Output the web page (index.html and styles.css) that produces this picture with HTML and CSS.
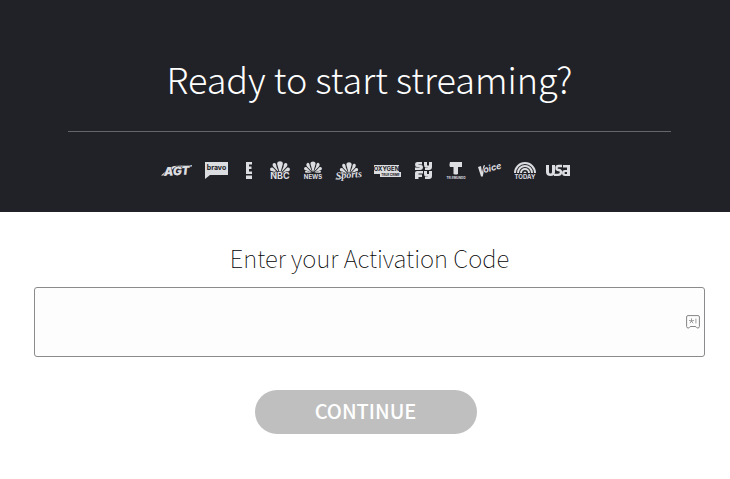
FILE: index.html
```html
<!DOCTYPE html>
<html lang="en">
<head>
<meta charset="utf-8">
<meta name="viewport" content="width=device-width, initial-scale=1">
<title>Activate</title>
<link rel="stylesheet" href="styles.css">
</head>
<body>
<svg class="defs" aria-hidden="true">
  <symbol id="peacock" viewBox="0 0 20 13">
    <g fill="#dcdde0">
      <path d="M9.6 11.8 7.2 3.2C6.5-.6 13.5-.6 12.8 3.2L10.4 11.8Z"/>
      <path d="M9 11.8 6.5 5.8C6.3 3 5.5 1.5 3.8 2 2 2.8 2.4 5 3.6 6.1Z"/>
      <path d="M11 11.8 13.5 5.8C13.7 3 14.5 1.5 16.2 2 18 2.8 17.6 5 16.4 6.1Z"/>
      <path d="M8.4 12.6 3.2 7C1.4 5.9 0 7 .1 8.4.2 10 1.5 10.2 2.5 10.3Z"/>
      <path d="M11.6 12.6 16.8 7C18.6 5.9 20 7 19.9 8.4 19.8 10 18.5 10.2 17.5 10.3Z"/>
      <path d="M8.2 13 2.4 10.8C.8 10.7 .7 13 2.3 13ZM11.8 13 17.6 10.8C19.2 10.7 19.3 13 17.7 13Z"/>
    </g>
  </symbol>
</svg>
<header class="hero">
  <h1>Ready to start streaming?</h1>
  <hr>
  <div class="logos">
    <svg width="33" height="20" viewBox="0 0 33 20" role="img" aria-label="AGT">
      <path d="M1 14.5 10 6.5 14 5 32 4 31.5 5.8 14 7 6 14.5Z"/>
      <text class="agt" x="4" y="15" transform="rotate(-3 4 15)">AGT</text>
    </svg>
    <svg width="27" height="20" viewBox="0 0 27 20" role="img" aria-label="bravo">
      <path d="M2 1H25V14H7L2 18Z"/>
      <text class="bravo" x="13.5" y="9" text-anchor="middle">bravo</text>
    </svg>
    <svg width="18" height="20" viewBox="0 0 18 20" role="img" aria-label="E!">
      <path d="M6 1H12V3.5H9V5.5H11.5V8H9V10.5H12V13H6ZM6 14.5H12V18H6Z"/>
    </svg>
    <svg width="24" height="20" viewBox="0 0 24 20" role="img" aria-label="NBC">
      <use href="#peacock" x="2" y="0" width="20" height="13"/>
      <text class="nbc" x="12" y="18" text-anchor="middle">NBC</text>
    </svg>
    <svg width="22" height="20" viewBox="0 0 22 20" role="img" aria-label="NBC News">
      <use href="#peacock" x="2" y="0" width="18" height="12"/>
      <text class="news" x="11" y="18" text-anchor="middle">NEWS</text>
    </svg>
    <svg width="29" height="20" viewBox="0 0 29 20" role="img" aria-label="NBC Sports">
      <use href="#peacock" x="5" y="1" width="20" height="12"/>
      <text class="sports" x="15" y="17" text-anchor="middle" transform="rotate(-5 15 17)">Sports</text>
      <path d="M1.5 18Q6 19.5 9 15.5" fill="none" stroke="#dcdde0" stroke-width=".8"/>
    </svg>
    <svg width="29" height="20" viewBox="0 0 29 20" role="img" aria-label="Oxygen True Crime">
      <path d="M1 4H26V11H28V16H7V13H1Z"/>
      <text class="oxygen" x="13.5" y="10" text-anchor="middle">OXYGEN</text>
      <text class="crime" x="17.5" y="15" text-anchor="middle">TRUE CRIME</text>
    </svg>
    <svg width="23" height="20" viewBox="0 0 23 20" role="img" aria-label="SYFY">
      <path d="M5 1H10V3.5H6.5V4H9Q11 4 11 6 11 9 8 9H3V6.5H7.5V6H5Q3 6 3 3.5 3 1 5 1ZM12 1H15V4.5H17V1H20V6Q20 9 17 9H13V6.8H16V6.5H14Q12 6.5 12 4ZM5 10H11V12.5H6.5V13.5H10V16H6.5V18H3V12Q3 10 5 10ZM12 10H15V13H17V10H20V15Q20 18 17 18H13V15.8H16V15.5H14Q12 15.5 12 13Z"/>
    </svg>
    <svg width="22" height="20" viewBox="0 0 22 20" role="img" aria-label="Telemundo">
      <path d="M5 1H17V6H13V13Q11 14 8.5 13V6H5Q4 3.5 5 1Z"/>
      <text class="telemundo" x="11" y="18" text-anchor="middle">TELEMUNDO</text>
    </svg>
    <svg width="27" height="20" viewBox="0 0 27 20" role="img" aria-label="The Voice">
      <path d="M1 6 4 5 5 11 6.5 4.5 8 4 5.8 15.5H4Z"/>
      <text class="voice" x="7" y="12" transform="rotate(-14 7 12)">oice</text>
    </svg>
    <svg width="22" height="20" viewBox="0 0 22 20" role="img" aria-label="Today">
      <path d="M1 12A10 10 0 0 1 21 12M4 12A7 7 0 0 1 18 12M7 12A4 4 0 0 1 15 12" fill="none" stroke="#dcdde0" stroke-width="2"/>
      <path d="M9.5 12A1.5 1.5 0 0 1 12.5 12Z"/>
      <text class="today" x="11" y="18" text-anchor="middle">TODAY</text>
    </svg>
    <svg width="25" height="20" viewBox="0 0 25 20" role="img" aria-label="USA">
      <path d="M0 4H3V11Q3 12.5 4.5 12.5 6 12.5 6 11V4H9V11Q9 15 4.5 15 0 15 0 11Z"/>
      <path d="M16 5H12.5Q10.5 5 10.5 7T12.5 9Q15 9.3 15 11 15 13.8 12 13.8H8" fill="none" stroke="#dcdde0" stroke-width="2.3"/>
      <path fill-rule="evenodd" d="M17 4H24V15H19Q16 15 16 12T19 9H21V6.5H17ZM21 11H19.5Q18.5 11 18.5 12T19.5 13H21Z"/>
    </svg>
  </div>
</header>
<main>
  <form>
    <label for="code">Enter your Activation Code</label>
    <div class="field">
      <input id="code" type="text" autocomplete="off">
      <svg class="key" width="14" height="14" viewBox="0 0 14 14" aria-hidden="true">
        <path d="M2 .6H12Q13.4 .6 13.4 2V11.5Q13.4 12.8 12 13 10.8 13.2 10.5 12.4 10.2 11.5 9 11.5H5Q3.8 11.5 3.5 12.4 3.2 13.2 2 13 .6 12.8 .6 11.5V2Q.6 .6 2 .6Z"/>
        <path d="M5.5 3.3V6L3 5.3M5.5 6 8 5.3M5.5 6 4 8.2M5.5 6 7 8.2M9.9 3.6V8.4" stroke-width=".8"/>
      </svg>
    </div>
    <button type="button">CONTINUE</button>
  </form>
</main>
</body>
</html>
```
FILE: styles.css
```css
* {
  box-sizing: border-box;
}

body {
  margin: 0;
  background: #fff;
  color: #212227;
  font-family: "Noto Sans CJK SC", "Open Sans", sans-serif;
  font-weight: 300;
}

.defs {
  display: none;
}

.hero {
  padding: 54px 25px 31px 34px;
  background: #212227;
  color: #fff;
  text-align: center;
}

h1 {
  margin: 0;
  font-size: 36px;
  font-weight: 300;
  line-height: 48px;
}

hr {
  width: 90%;
  height: 1px;
  margin: 29px auto;
  border: 0;
  background: #65666a;
}

.logos {
  display: flex;
  justify-content: center;
  gap: 10px;
  margin-right: 8px;
}

.logos svg {
  flex: none;
  fill: #dcdde0;
  font-family: Inter, sans-serif;
  font-weight: 700;
}

.logos text {
  stroke: #212227;
  stroke-width: 1px;
  paint-order: stroke;
}

.agt {
  font-size: 12px;
  font-style: italic;
  font-weight: 900;
}

.nbc {
  font-size: 9px;
}

.news,
.today {
  font-size: 6px;
}

.sports {
  font-family: "Liberation Serif", serif;
  font-size: 10px;
  font-style: italic;
}

.logos .bravo,
.logos .oxygen,
.logos .crime {
  fill: #212227;
  stroke: none;
}

.bravo {
  font-size: 7px;
}

.oxygen {
  font-size: 6px;
}

.crime {
  font-size: 3px;
}

.logos .telemundo {
  font-size: 3px;
  stroke: none;
}

.voice {
  font-size: 9px;
  font-style: italic;
}

form {
  display: flex;
  flex-direction: column;
  padding: 26px 25px 32px 34px;
}

label {
  color: #000;
  font-size: 24px;
  font-weight: 100;
  line-height: 40px;
  text-align: center;
}

.field {
  position: relative;
  margin: 9px 0 33px;
}

input {
  display: block;
  width: 100%;
  height: 70px;
  padding: 0 32px 0 16px;
  border: 1px solid #8b8b8d;
  border-radius: 3px;
  background: #fdfdfd;
  font: inherit;
  font-size: 24px;
}

.key {
  position: absolute;
  top: 28px;
  right: 5px;
  fill: none;
  stroke: #858585;
}

button {
  align-self: center;
  width: 222px;
  height: 44px;
  margin-right: 8px;
  padding: 0 0 2px;
  border: 0;
  border-radius: 22px;
  background: #bfbfbf;
  color: #fff;
  font: inherit;
  font-size: 20px;
  font-weight: 500;
  line-height: 40px;
}
```
